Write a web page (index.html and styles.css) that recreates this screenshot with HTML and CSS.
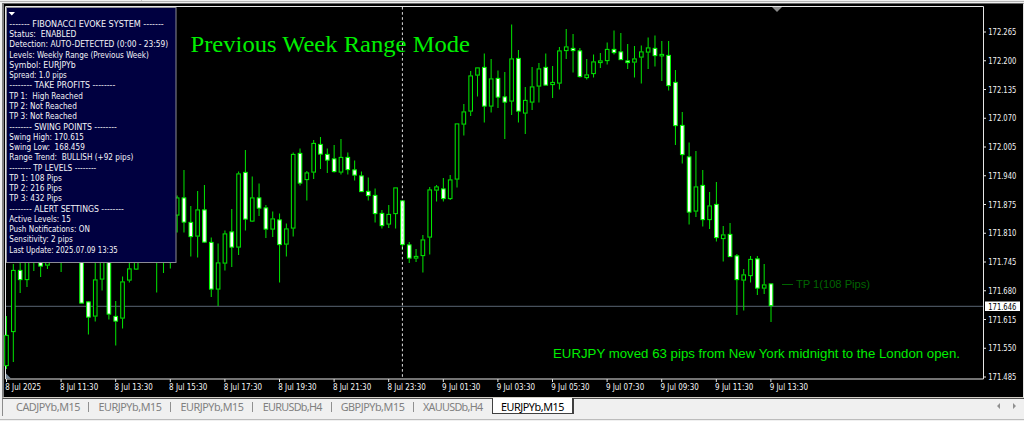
FILE: index.html
```html
<!DOCTYPE html>
<html lang="en">
<head>
    <meta charset="UTF-8">
    <meta name="viewport" content="width=device-width, initial-scale=1.0">
    <title>EURJPYb,M15</title>
    <link rel="stylesheet" href="styles.css">
</head>
<body>
    <div class="toolbar-edge"></div>
    <main class="chart-window">
        <svg id="chart" class="chart" viewBox="4 4 1019 393">
            <path class="frame" d="M5.5 379V6.5H983.5V379Z"/>
            <path class="shift-mark" d="M772 7h10l-5 5z"/>
            <path class="corner-mark" d="M6 373.5v5h5z"/>
            <path class="bid-line" d="M6 306.3H983"/>
            <g id="candles"></g>
            <text class="title" x="190.5" y="51.5" textLength="279.5" lengthAdjust="spacingAndGlyphs">Previous Week Range Mode</text>
            <path class="day-line" d="M402.4 7V379"/>
            <path class="tp-line" d="M782 284.5H793"/>
            <text class="tp-label" x="796" y="288" textLength="74">TP 1(108 Pips)</text>
            <text class="note" x="553" y="358" textLength="407" lengthAdjust="spacingAndGlyphs">EURJPY moved 63 pips from New York midnight to the London open.</text>
            <g id="prices" class="axis"></g>
            <g id="dates" class="axis"></g>
            <g id="panel" class="panel">
                <rect x="6.5" y="7.5" width="169.5" height="255"/>
                <path d="M8.5 12h6.5l-3.2 3.5z"/>
            </g>
        </svg>
    </main>
    <nav class="tabs">
        <span class="tab">CADJPYb,M15</span>
        <span class="tab">EURJPYb,M15</span>
        <span class="tab">EURJPYb,M15</span>
        <span class="tab short">EURUSDb,H4</span>
        <span class="tab">GBPJPYb,M15</span>
        <span class="tab short last">XAUUSDb,H4</span>
        <span class="tab active">EURJPYb,M15</span>
        <svg class="arrows" width="24" height="10" viewBox="0 0 24 10">
            <path d="M5 2v6L2 5zM18 2v6l3-3z"/>
        </svg>
    </nav>
    <div class="status-edge"></div>
    <script src="script.js"></script>
</body>
</html>
```
FILE: styles.css
```css
body {
    margin: 0;
    height: 421px;
    overflow: hidden;
    display: flex;
    flex-direction: column;
    background-color: #f0f0f0;
    font-family: "Noto Sans", sans-serif;
}
.toolbar-edge {
    height: 2px;
    margin-bottom: 1px;
    border-bottom: 1px solid #b4b4b4;
    background: linear-gradient(#c4c4c4, #c4c4c4) 141px 0 / 1px 2px no-repeat;
    box-sizing: border-box;
}
.chart-window {
    height: 393px;
    margin-left: 2px;
    border-left: 2px solid #808080;
    border-top: 1px solid #696969;
    border-right: 1px solid #e3e3e3;
    border-bottom: 1px solid #d4d0c8;
    background-color: #000;
}
.chart {
    display: block;
    width: 1019px;
    height: 393px;
}
.frame {
    fill: none;
    stroke: #e6e6e6;
    stroke-width: 1;
}
.shift-mark {
    fill: #8a8a8a;
}
.corner-mark {
    fill: #778899;
}
.bid-line {
    stroke: #596673;
    stroke-width: 1;
}
.day-line {
    stroke: #e0e0e0;
    stroke-width: 1;
    stroke-dasharray: 2.6 2.5;
}
.candle {
    stroke: #00e800;
    stroke-width: 1.05;
    fill: #000;
}
.candle.down {
    stroke: #00ff00;
    fill: #fff;
}
.wick {
    stroke: #00dc00;
    stroke-width: 1.05;
}
.title {
    font: 23px "Liberation Serif", serif;
    fill: #00f000;
}
.note {
    font: 13.5px "Liberation Sans", sans-serif;
    fill: #00ee00;
}
.tp-label {
    font: 11.2px "Liberation Sans", sans-serif;
    fill: #006400;
}
.tp-line {
    stroke: #006400;
    stroke-width: 1;
}
.axis text {
    font: 8.1px "DejaVu Sans Condensed", "DejaVu Sans", sans-serif;
    fill: #f4f4f4;
}
.axis path {
    stroke: #e6e6e6;
    stroke-width: 1;
}
.axis .bid-box {
    fill: #fff;
}
.axis .bid-text {
    fill: #000;
}
.panel rect {
    fill: #000040;
    stroke: #8c8c94;
    stroke-width: 1;
}
.panel path {
    fill: #fff;
}
.panel text {
    font: 8.4px "DejaVu Sans Condensed", "DejaVu Sans", sans-serif;
    fill: #f4f4f8;
    white-space: pre;
}
.tabs {
    display: flex;
    align-items: flex-start;
    height: 18px;
    margin-left: 2px;
    padding-left: 4px;
    border-left: 1px solid #8c8c8c;
    border-top: 1px solid #505050;
    box-sizing: border-box;
}
.tab {
    width: 82px;
    height: 15px;
    box-sizing: border-box;
    font-size: 10.8px;
    line-height: 16px;
    letter-spacing: -0.45px;
    text-align: center;
    white-space: nowrap;
    color: #808080;
    background: linear-gradient(#909090, #909090) 100% 3px / 1px 10px no-repeat;
}
.tab.short {
    width: 78.5px;
    letter-spacing: -0.7px;
}
.tab.last {
    background: none;
}
.tab.active {
    height: 16px;
    margin-top: -1px;
    line-height: 18px;
    border: 1px solid #404040;
    border-top: none;
    border-right-width: 2px;
    background: #fff;
    color: #000;
}
.arrows {
    margin: 2px 5px 0 auto;
    fill: #909090;
}
.status-edge {
    height: 1px;
    margin-top: 3px;
    background-color: #bcbcbc;
}
```
FILE: script.js
```js
const SVG = 'http://www.w3.org/2000/svg';

// [down, high, body top, body bottom, low]
const candles = [
    [0,316,335,366,369], [0,264,270,332,362], [1,262,270,280,293], [0,255,258,280,287],
    [0,250,252,260,271], [1,255,258,266.5,277], [0,255,258,265.5,269], [0,250,252,258,260],
    [0,250,252,260,272], [0,250,252,258,260], [1,250,252,258,260], [1,250,252,303.5,303.5],
    [1,301,301.5,317.5,334.5], [0,250,279.5,316.5,321.5], [0,250,252,279.5,290.5], [1,250,252,314.5,319.5],
    [1,301,316,321.5,345.5], [0,276.5,281.5,318.5,328.5], [0,262,268.5,280.5,282.5], [0,250,252,269.5,270],
    [0,250,252,258,260], [0,250,252,258,260], [0,250,252,258,292.5], [0,250,252,258,273],
    [0,250,252,258,268.5], [0,195.5,197.5,215.5,232.5], [1,170,197.5,222.5,232.5], [1,206,222,237,256.5],
    [0,191,209.5,236.5,257.5], [1,185,209.5,242.5,243], [1,237.5,242,289.5,297], [0,243.5,262.5,289.5,306],
    [0,230.5,233.5,263.5,270.5], [1,209,231.5,247.5,267], [0,171.5,173.5,247.5,255], [1,150,172,219.5,230.5],
    [0,176.5,197.5,221.5,222], [1,183.5,197.5,208.5,216], [1,205,207.5,229.5,238], [0,211.5,218.5,229.5,237],
    [1,213.5,219.5,245,282.5], [0,223.5,228.5,244.5,256.5], [0,152.5,154,228.5,236.5], [1,148.5,153,183.5,185.5],
    [0,171,172.5,180,200.5], [0,140,143,172.5,179], [1,137,144,154.5,169], [1,148.5,154,160.5,173],
    [1,145,158.5,172,172.5], [0,139,157,172.5,174.5], [1,152.5,157,170,174.5], [1,160.5,169.5,175.5,180.5],
    [1,171.5,175.5,192,192], [1,177.5,191,196,200.5], [1,188.5,195,214,222.5], [1,210,213,226,228.5],
    [0,205,214,224.5,228], [0,187.5,187.5,214,228.5], [1,200.5,200.5,245,250], [1,242,244.5,258.5,263],
    [0,249,256,258.5,262], [0,235,239.5,256,272.5], [0,187,189.5,237.5,254.5], [0,185,186.5,190.5,201.5],
    [1,178,188.5,199,201.5], [0,175,179.5,199,200], [0,123.5,123.5,179.5,187.5], [0,104,111.5,124.5,135.5],
    [0,71,75.5,111.5,116], [0,67.5,67.5,75.5,96.5], [1,53.5,67,106.5,122.5], [0,59,78.5,106.5,112.5],
    [1,70.5,78,97.5,108], [1,72,96.5,102.5,139], [0,24.5,58.5,101.5,115], [1,50,58,111.5,122.5],
    [0,87,100,113.5,134], [0,67,86.5,102.5,110], [0,63,68.5,86.5,102.5], [1,53.5,67,85.5,85.5],
    [0,66,82,85,98], [0,47,50.5,83.5,89.5], [0,29,46.5,51,59], [1,34,48,51,72.5],
    [1,48,50.5,77,77.5], [0,59,74.5,78,79.5], [0,54.5,61.5,74,77.5], [0,53,60.5,63,68],
    [0,42.5,49,61,64.5], [1,30.5,49,53,54.5], [1,33,51.5,60,60], [1,44,60.5,63,69],
    [0,46,58.5,62.5,77.5], [0,45.5,51.5,57.5,83.5], [0,37.5,47.5,52.5,69], [1,35.5,48,56,66.5],
    [0,41,54,56,81], [1,41,55,86,90.5], [1,70,82,126,145], [1,112,125,155,163.5],
    [1,142.5,156.5,212.5,224.5], [0,151,186.5,211.5,217], [1,170,185,220,226.5], [0,192,205.5,220,229],
    [1,182,204,238,241.5], [0,226,234.5,239,261.5], [1,223,234,257,257], [1,254,255.5,280,315],
    [0,269,274.5,280.5,310.5], [0,256,259,276,282.5], [1,256,258.5,288.5,295], [0,264,284.5,288.5,294],
    [1,283.5,283.5,306,322]
];

// [text, width]
const panelLines = [
    ['------- FIBONACCI EVOKE SYSTEM -------', 154.5],
    ['Status:  ENABLED', 67],
    ['Detection: AUTO-DETECTED (0:00 - 23:59)', 159],
    ['Levels: Weekly Range (Previous Week)', 139.5],
    ['Symbol: EURJPYb', 66.5],
    ['Spread: 1.0 pips', 57.5],
    ['-------- TAKE PROFITS --------', 106],
    ['TP 1:  High Reached', 73.5],
    ['TP 2: Not Reached', 67.5],
    ['TP 3: Not Reached', 67.5],
    ['-------- SWING POINTS --------', 107.5],
    ['Swing High: 170.615', 74.5],
    ['Swing Low:  168.459', 75.5],
    ['Range Trend:  BULLISH (+92 pips)', 124],
    ['-------- TP LEVELS --------', 87],
    ['TP 1: 108 Pips', 52.5],
    ['TP 2: 216 Pips', 52.5],
    ['TP 3: 432 Pips', 52.5],
    ['-------- ALERT SETTINGS --------', 114.5],
    ['Active Levels: 15', 61.5],
    ['Push Notifications: ON', 80.5],
    ['Sensitivity: 2 pips', 63.5],
    ['Last Update: 2025.07.09 13:35', 108.5]
];

const dates = ['8 Jul 2025', '8 Jul 11:30', '8 Jul 13:30', '8 Jul 15:30', '8 Jul 17:30',
    '8 Jul 19:30', '8 Jul 21:30', '8 Jul 23:30', '9 Jul 01:30', '9 Jul 03:30',
    '9 Jul 05:30', '9 Jul 07:30', '9 Jul 09:30', '9 Jul 11:30', '9 Jul 13:30'];

function add(parentId, tag, attrs, text) {
    const el = document.createElementNS(SVG, tag);
    for (const key in attrs) {
        el.setAttribute(key, attrs[key]);
    }
    if (text) {
        el.textContent = text;
    }
    document.getElementById(parentId).appendChild(el);
}

function label(parentId, text, x, y, width, cls) {
    add(parentId, 'text', {
        x: x, y: y, textLength: width, lengthAdjust: 'spacingAndGlyphs', class: cls || 'label'
    }, text);
}

candles.forEach(([down, high, top, bottom, low], i) => {
    const x = 6.5 + i * 6.826;
    add('candles', 'path', { class: 'wick', d: `M${x} ${high}V${top}M${x} ${bottom}V${low}` });
    add('candles', 'rect', {
        class: down ? 'candle down' : 'candle',
        x: x - 1.8, y: top + 0.4, width: 3.6, height: Math.max(bottom - top - 0.8, 1.5)
    });
});

for (let i = 0; i < 13; i++) {
    const y = 32 + i * 28.75;
    add('prices', 'path', { d: `M984 ${y}h2` });
    label('prices', (172.265 - i * 0.065).toFixed(3), 988.3, y + 3.2, 28);
}
add('prices', 'rect', { class: 'bid-box', x: 985, y: 301.5, width: 35, height: 9.5 });
label('prices', '171.646', 988.3, 309.5, 28, 'bid-text');

dates.forEach((text, i) => {
    const x = 6.5 + i * 54.6;
    add('dates', 'path', { d: `M${x} 379v3` });
    label('dates', text, x - 1.2, 390.2, i ? 38.3 : 35.7);
});

panelLines.forEach(([text, width], i) => {
    label('panel', text, 9.3, 26.8 + i * 10.27, width);
});
```
